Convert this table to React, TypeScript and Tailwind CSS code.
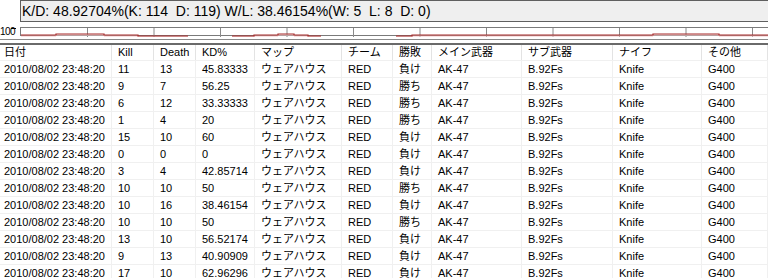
const rows: [string, string, string, string][] = [
  ["11", "13", "45.83333", "負け"],
  ["9", "7", "56.25", "勝ち"],
  ["6", "12", "33.33333", "勝ち"],
  ["1", "4", "20", "勝ち"],
  ["15", "10", "60", "負け"],
  ["0", "0", "0", "負け"],
  ["3", "4", "42.85714", "負け"],
  ["10", "10", "50", "勝ち"],
  ["10", "16", "38.46154", "負け"],
  ["10", "10", "50", "勝ち"],
  ["13", "10", "56.52174", "負け"],
  ["9", "13", "40.90909", "負け"],
  ["17", "10", "62.96296", "負け"],
];

const headers = ["日付", "Kill", "Death", "KD%", "マップ", "チーム", "勝敗", "メイン武器", "サブ武器", "ナイフ", "その他"];
const widths = ["w-[112px]", "w-[42px]", "w-[42px]", "w-[59px]", "w-[87px]", "w-[51px]", "w-[39px]", "w-[90px]", "w-[91px]", "w-[89px]", "flex-1"];

// step chart segments, x in page px minus 20, y inside box
const segs = [
  "0,6 35,6 35,5 83,5 83,6 117,6 117,7 167,7",
  "211,7 233,7 233,6 257,6 257,5 273,5 273,6 287,6 287,7 300,7",
  "375,7 391,7 391,6 632,6 632,5 698,5 698,6 760,6",
];
const grid = [66.5, 133, 199.5, 266, 332.5, 399, 465.5, 532, 598.5, 665, 731.5];

function Chart() {
  return (
    <svg className="absolute inset-0" width="760" height="9" viewBox="0 -1 760 9">
      {grid.map((x) => (
        <line key={x} x1={x} x2={x} y1={-1} y2={8} stroke="#8a8a8a" strokeWidth={1} />
      ))}
      {segs.map((p, i) => (
        <g key={i}>
          <polyline points={p} transform="translate(0,1)" fill="none" stroke="#f2c4c4" strokeWidth={1} />
          <polyline points={p} fill="none" stroke="#a62a2a" strokeWidth={1.2} />
        </g>
      ))}
    </svg>
  );
}

export default function App() {
  return (
    <div
      className="w-[768px] h-[278px] overflow-hidden bg-white text-black"
      style={{ fontFamily: '"Liberation Sans", "Noto Sans CJK JP", sans-serif' }}
    >
      <div className="flex h-[22px]">
        <div className="w-[20px] shrink-0" />
        <div className="flex-1 border border-r-0 border-[#5f5f5f] bg-[#efefef] pl-[1px] text-[14px] leading-[20px] whitespace-pre">
          K/D: 48.92704%(K: 114  D: 119) W/L: 38.46154%(W: 5  L: 8  D: 0)
        </div>
      </div>
      <div className="h-[5px]" />
      <div className="flex h-[9px]">
        <div className="w-[20px] shrink-0 relative text-[10px] leading-[9px] tracking-[-0.5px]">
          100
          <div className="absolute left-[11px] top-[1px] w-[5px] h-px bg-black" />
        </div>
        <div className="flex-1 relative border-y border-l border-[#7a7a7a]">
          <Chart />
        </div>
      </div>
      <div className="h-[3px]" />
      <div className="h-px bg-[#8a8a8a]" />
      <div className="h-[3px]" />
      <div className="h-[2px] bg-[#6a6a6a]" />
      <div className="flex h-[16px] text-[11px] leading-[15px] border-b border-[#f0f0f0]">
        {headers.map((h, i) => (
          <div key={h} className={`${widths[i]} shrink-0 border-r border-[#e3e3e3] ${i === 0 ? "pl-[4px]" : "pl-[6px]"}`}>
            {h}
          </div>
        ))}
      </div>
      {rows.map((r, idx) => {
        const cells = ["2010/08/02 23:48:20", r[0], r[1], r[2], "ウェアハウス", "RED", r[3], "AK-47", "B.92Fs", "Knife", "G400"];
        return (
          <div key={idx} className="flex h-[17px] text-[11px] leading-[16px] border-b border-[#f0f0f0]">
            {cells.map((c, i) => (
              <div key={i} className={`${widths[i]} shrink-0 border-r border-[#f0f0f0] whitespace-nowrap ${i === 0 ? "pl-[4px]" : "pl-[6px]"}`}>
                {c}
              </div>
            ))}
          </div>
        );
      })}
    </div>
  );
}
